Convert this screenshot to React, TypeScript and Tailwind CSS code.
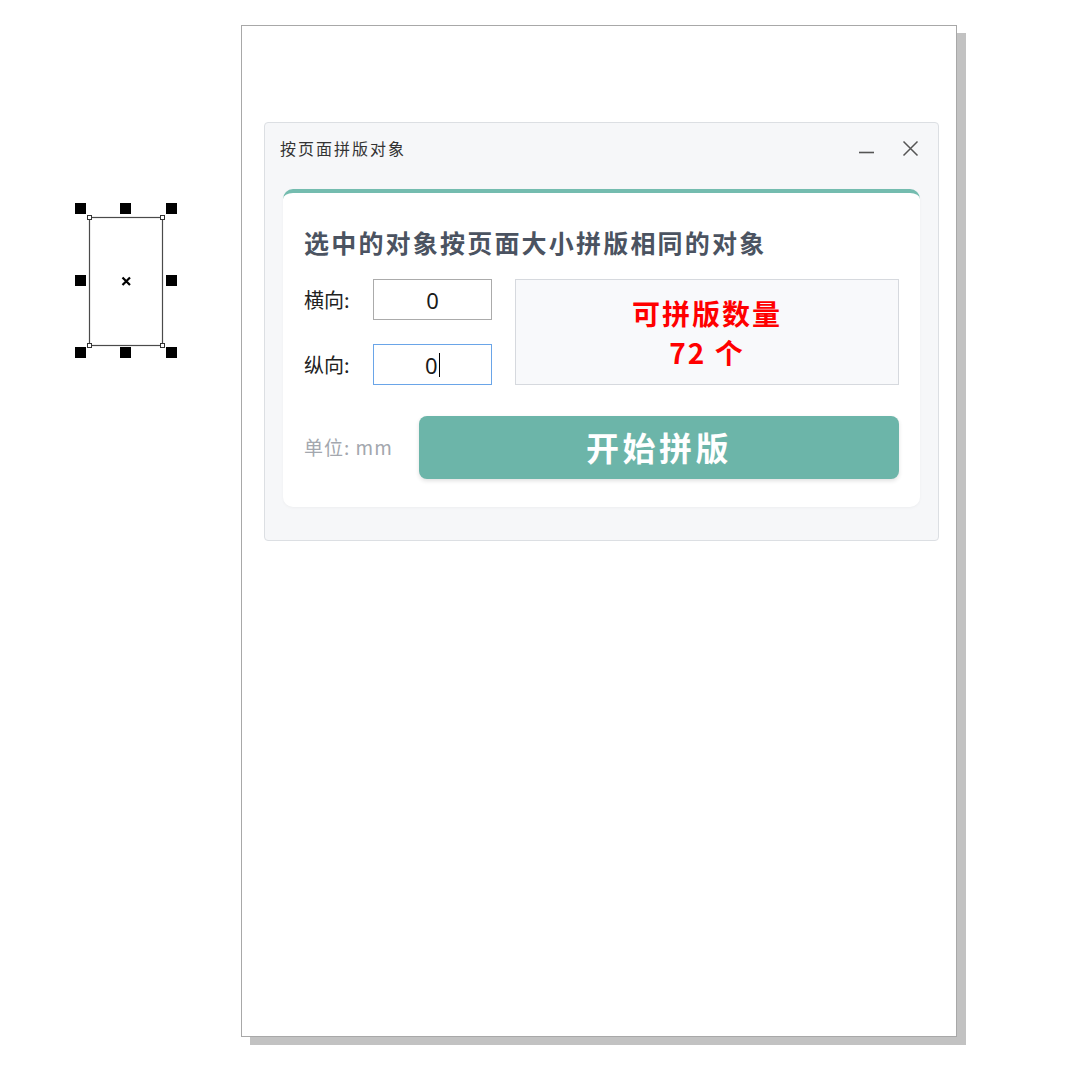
import React from "react";

const CJK = "font-['Noto_Sans_CJK_SC','Noto_Sans',sans-serif]";

// selection frame with its eight handles, as drawn on the canvas
function Selection() {
    const handles = [
        [75, 203], [120, 203], [166, 203],
        [75, 275], [166, 275],
        [75, 347], [120, 347], [166, 347],
    ];
    return (
        <svg className="absolute left-0 top-0" width="200" height="380" viewBox="0 0 200 380">
            <rect x="89.5" y="217.5" width="73" height="128" fill="none" stroke="#4a4a4a" strokeWidth="1.2" />
            {[[89.5, 217.5], [162.5, 217.5], [89.5, 345.5], [162.5, 345.5]].map(([x, y], i) => (
                <rect key={i} x={x - 2} y={y - 2} width="4" height="4" fill="#fff" stroke="#333" strokeWidth="1" />
            ))}
            {handles.map(([x, y], i) => (
                <rect key={"h" + i} x={x} y={y} width="11" height="11" fill="#000" />
            ))}
            <path d="M122.5 277.5 L130 285 M130 277.5 L122.5 285" stroke="#000" strokeWidth="2.2" />
        </svg>
    );
}

function NumberBox({ value, focused }: { value: string; focused?: boolean }) {
    const border = focused ? "border-[#6aa5e8]" : "border-[#ababab]";
    return (
        <div className={"flex h-[41px] w-[119px] items-center justify-center border bg-white " + border}>
            <span className="font-['Noto_Sans',sans-serif] text-[22px] leading-none text-[#1a1a1a]">{value}</span>
            {focused && <span className="ml-[1px] h-[24px] w-[1.5px] bg-black" />}
        </div>
    );
}

export default function App() {
    return (
        <div className={`relative min-h-[1074px] w-full bg-white ${CJK}`}>
            <Selection />

            {/* page */}
            <div className="absolute left-[241px] top-[25px] h-[1012px] w-[716px] border border-[#a8a8a8] bg-white pl-[22px] pt-[96px] shadow-[9px_8px_0_#c2c2c2]">
                {/* dialog */}
                <div className="w-[675px] rounded-[4px] border border-[#dcdfe3] bg-[#f6f7f9] px-[18px] pb-[33px]">
                    <div className="flex h-[66px] items-start justify-between">
                        <span className="-ml-[3px] mt-[13px] text-[16px] tracking-[2px] text-[#333]">按页面拼版对象</span>
                        <div className="mt-[17px] flex items-center gap-[27px] pr-[1px]">
                            <svg width="17" height="17" viewBox="0 0 17 17">
                                <path d="M1 12.5 H16" stroke="#555" strokeWidth="1.6" />
                            </svg>
                            <svg width="17" height="17" viewBox="0 0 17 17">
                                <path d="M1.5 1.5 L15.5 15.5 M15.5 1.5 L1.5 15.5" stroke="#555" strokeWidth="1.5" />
                            </svg>
                        </div>
                    </div>

                    {/* card */}
                    <div className="rounded-[10px] border-t-4 border-[#74bcaf] bg-white px-[21px] pb-[28px] pt-[30px] shadow-[0_1px_3px_rgba(0,0,0,0.04)]">
                        <h2 className="text-[25px] font-bold leading-[38px] tracking-[2.2px] text-[#4b5361]">
                            选中的对象按页面大小拼版相同的对象
                        </h2>

                        <div className="mt-[18px] flex gap-[23px]">
                            <div className="flex flex-col gap-[24px]">
                                <div className="flex items-center">
                                    <span className="w-[69px] text-[20px] text-[#222]">横向:</span>
                                    <NumberBox value="0" />
                                </div>
                                <div className="flex items-center">
                                    <span className="w-[69px] text-[20px] text-[#222]">纵向:</span>
                                    <NumberBox value="0" focused />
                                </div>
                            </div>

                            <div className="flex h-[106px] flex-1 flex-col items-center justify-center border border-[#d6d9de] bg-[#f8f9fb] pt-[2px] text-[28px] font-bold leading-[39px] tracking-[2px] text-[#ff0000]">
                                <span>可拼版数量</span>
                                <span>72 个</span>
                            </div>
                        </div>

                        <div className="mt-[31px] flex items-center">
                            <span className="w-[115px] text-[19px] tracking-[1px] text-[#a3a7ae]">单位:&nbsp;mm</span>
                            <button className="flex h-[63px] flex-1 items-center justify-center rounded-[8px] bg-[#6cb5a9] text-[33px] font-bold tracking-[3.5px] text-white shadow-[0_2px_4px_rgba(0,0,0,0.12)]">
                                开始拼版
                            </button>
                        </div>
                    </div>
                </div>
            </div>
        </div>
    );
}
